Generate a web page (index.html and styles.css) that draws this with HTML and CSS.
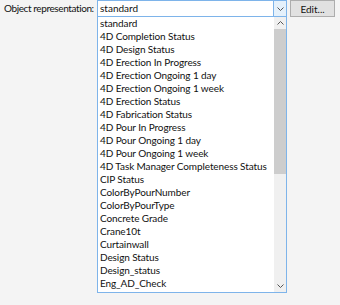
FILE: index.html
```html
<!DOCTYPE html>
<html lang="en">
<head>
    <meta charset="UTF-8">
    <title>Object representation</title>
    <link rel="stylesheet" href="styles.css">
</head>
<body>
    <div class="row">
        <label class="label">Object representation:</label>
        <div class="picker">
            <div class="combo">
                <span class="value">standard</span>
                <span class="drop"><svg width="7" height="4" viewBox="0 0 7 4"><path d="M0.5 0.5 L3.5 3.5 L6.5 0.5" fill="none" stroke="#555" stroke-width="1"/></svg></span>
            </div>
            <div class="list">
                <ul class="items">
                    <li>standard</li>
                    <li>4D Completion Status</li>
                    <li>4D Design Status</li>
                    <li>4D Erection In Progress</li>
                    <li>4D Erection Ongoing 1 day</li>
                    <li>4D Erection Ongoing 1 week</li>
                    <li>4D Erection Status</li>
                    <li>4D Fabrication Status</li>
                    <li>4D Pour In Progress</li>
                    <li>4D Pour Ongoing 1 day</li>
                    <li>4D Pour Ongoing 1 week</li>
                    <li>4D Task Manager Completeness Status</li>
                    <li>CIP Status</li>
                    <li>ColorByPourNumber</li>
                    <li>ColorByPourType</li>
                    <li>Concrete Grade</li>
                    <li>Crane10t</li>
                    <li>Curtainwall</li>
                    <li>Design Status</li>
                    <li>Design_status</li>
                    <li>Eng_AD_Check</li>
                </ul>
                <div class="scrollbar">
                    <span class="arrow"><svg width="7" height="4" viewBox="0 0 7 4"><path d="M0.5 3.5 L3.5 0.5 L6.5 3.5" fill="none" stroke="#555" stroke-width="1"/></svg></span>
                    <div class="track"><div class="thumb"></div></div>
                    <span class="arrow"><svg width="7" height="4" viewBox="0 0 7 4"><path d="M0.5 0.5 L3.5 3.5 L6.5 0.5" fill="none" stroke="#555" stroke-width="1"/></svg></span>
                </div>
            </div>
        </div>
        <button class="edit">Edit...</button>
    </div>
</body>
</html>
```

FILE: styles.css
```css
body { margin: 0; background: #f4f4f4; font-family: Lato, "Noto Sans", sans-serif; font-size: 10px; color: #111; }
.row { display: flex; align-items: flex-start; padding-left: 4px; }
.label { width: 93px; flex: none; line-height: 17px; white-space: nowrap; letter-spacing: -0.4px; }
.picker { width: 190px; display: flex; flex-direction: column; }
.combo { height: 17px; box-sizing: border-box; border: 1px solid #7eb4ea; background: white; display: flex; }
.value { flex: 1; padding-left: 2px; line-height: 15px; }
.drop { width: 12px; background: #e5f1fb; border-left: 1px solid #7eb4ea; display: flex; align-items: center; justify-content: center; }
.list { height: 276px; box-sizing: border-box; border: 1px solid #7eb4ea; border-top: none; background: white; display: flex; }
.items { flex: 1; list-style: none; margin: 0; padding: 0 0 0 2px; overflow: hidden; letter-spacing: -0.1px; }
.items li { height: 13px; line-height: 13px; white-space: nowrap; }
.scrollbar { width: 12px; background: #f0f0f0; display: flex; flex-direction: column; }
.arrow { height: 12px; display: flex; align-items: center; justify-content: center; }
.track { flex: 1; }
.thumb { height: 145px; background: #cdcdcd; }
.edit { margin-left: 3px; width: 45px; height: 17px; padding: 0; border: 1px solid #adadad; background: #e1e1e1; font: inherit; color: #111; }
```
